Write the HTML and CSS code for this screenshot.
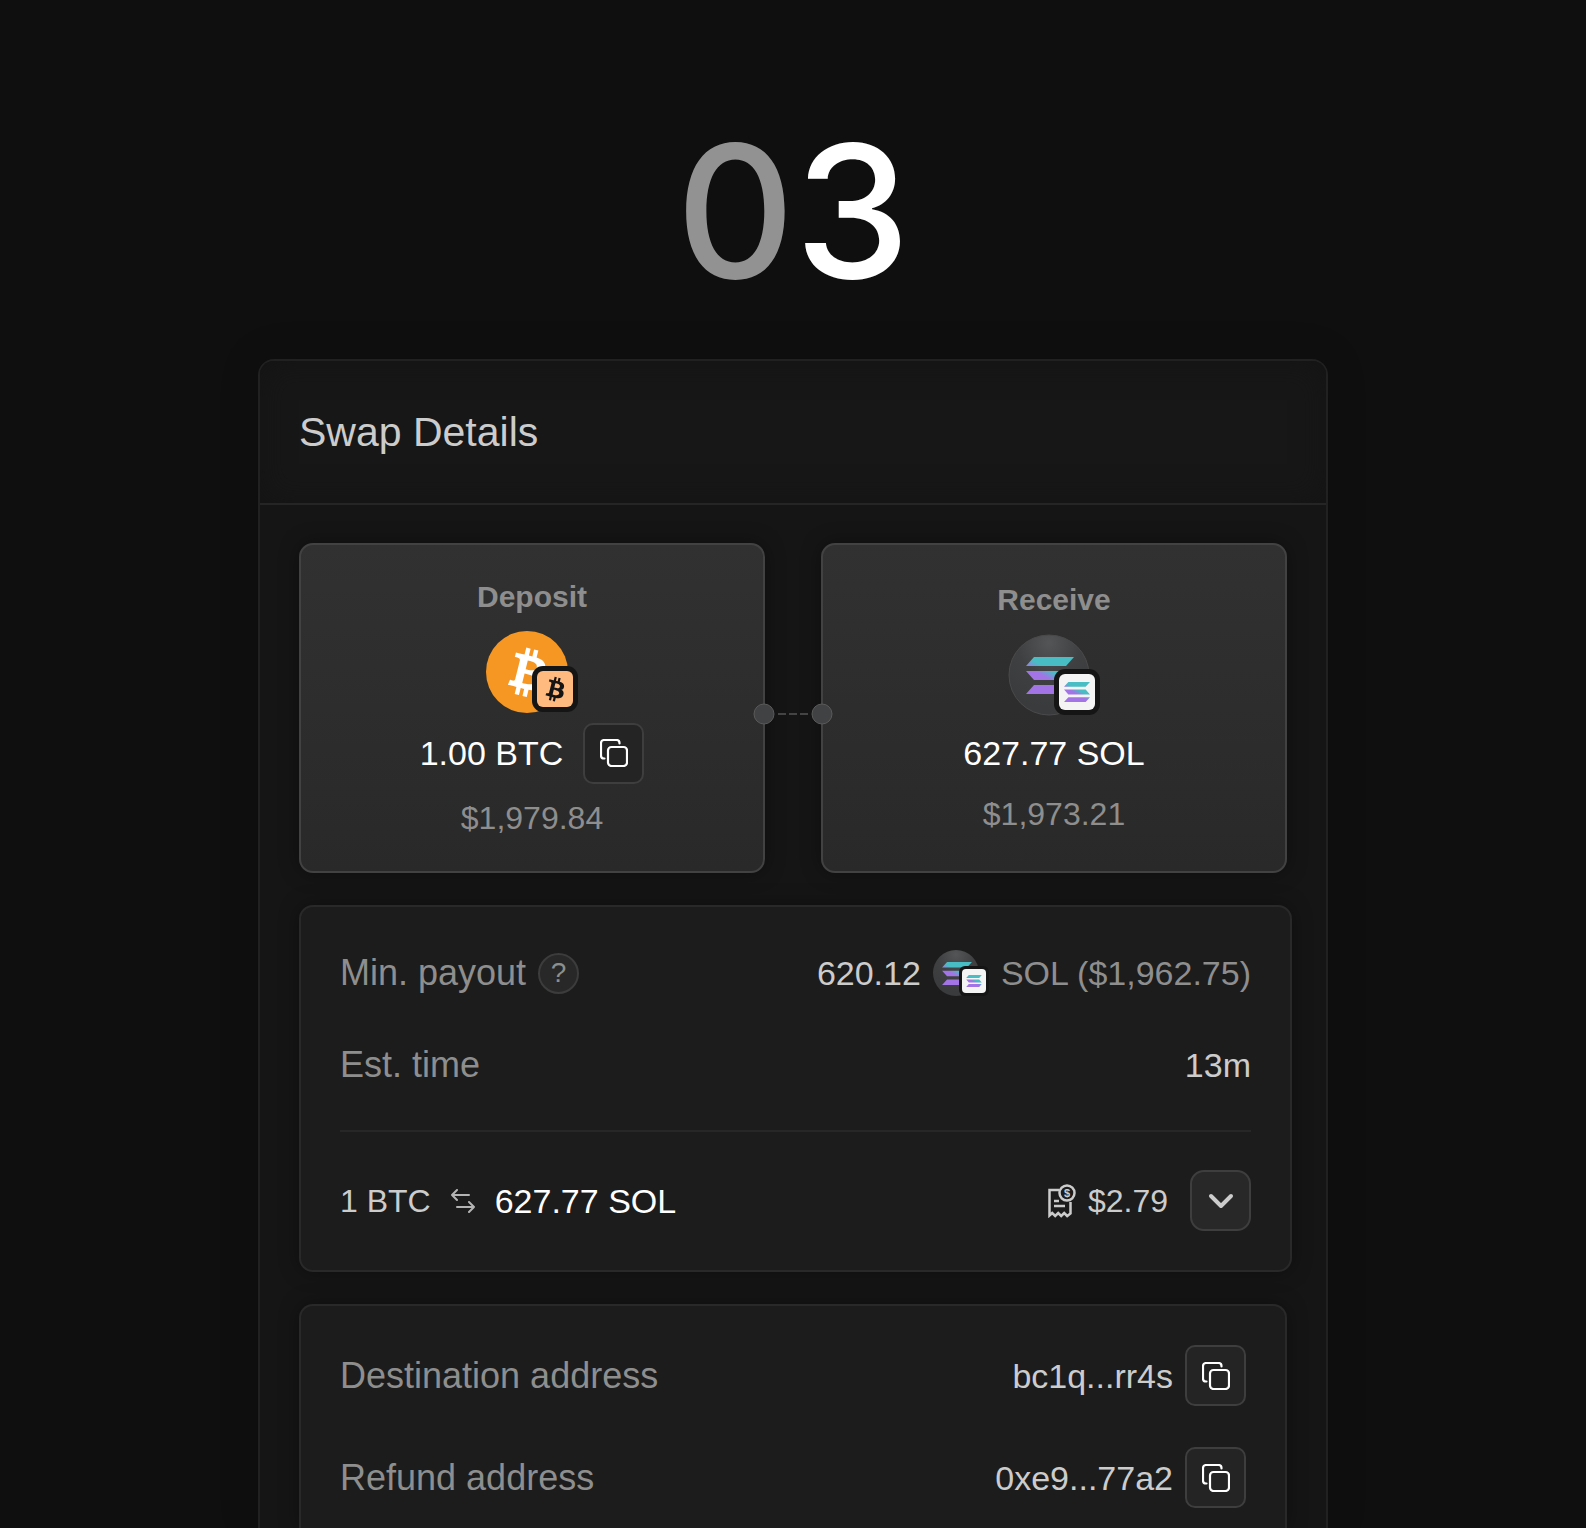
FILE: index.html
```html
<!doctype html>
<html lang="en">
<head>
  <meta charset="UTF-8">
  <meta name="viewport" content="width=device-width, initial-scale=1.0">
  <title>Swap Details</title>
  <link rel="stylesheet" href="styles.css">
</head>
<body>
  <!-- shared icon shapes -->
  <svg class="sprite" width="0" height="0" aria-hidden="true">
    <defs>
      <linearGradient id="sol-fill" gradientUnits="userSpaceOnUse" x1="21" y1="28" x2="31" y2="10">
        <stop offset="0.3" stop-color="#a374e6"/>
        <stop offset="0.7" stop-color="#48bdc3"/>
      </linearGradient>
      <radialGradient id="coin-fill" cx="0.5" cy="0.1" r="0.8">
        <stop offset="0" stop-color="#545557"/>
        <stop offset="0.5" stop-color="#3f4042"/>
        <stop offset="1" stop-color="#3a3b3d"/>
      </radialGradient>
      <symbol id="sol" viewBox="0 0 48 37">
        <path fill="url(#sol-fill)" d="M8 0h40l-8 9H0zM0 14h40l8 9H8zM8 28h40l-8 9H0z"/>
      </symbol>
      <symbol id="btc" viewBox="0 0 24 24">
        <path fill="currentColor" fill-rule="evenodd" d="M17.288 10.291c.24-1.59-.974-2.45-2.64-3.03l.54-2.153-1.315-.33-.525 2.107c-.345-.087-.705-.167-1.064-.25l.526-2.127-1.32-.33-.54 2.165c-.285-.067-.565-.132-.84-.2l-1.815-.45-.35 1.407s.975.225.955.236c.535.136.63.486.615.766l-1.477 5.92c-.075.166-.24.406-.614.314.015.02-.96-.24-.96-.24l-.66 1.51 1.71.426.93.242-.54 2.19 1.32.327.54-2.17c.36.1.705.19 1.05.273l-.51 2.154 1.32.33.545-2.19c2.24.427 3.93.257 4.64-1.774.57-1.637-.03-2.58-1.217-3.196.854-.193 1.5-.76 1.68-1.93zm-3.01 4.22c-.404 1.64-3.157.75-4.05.53l.72-2.9c.896.23 3.757.67 3.33 2.37zm.41-4.24c-.37 1.49-2.662.735-3.405.55l.654-2.64c.744.18 3.137.524 2.75 2.084z"/>
      </symbol>
      <symbol id="copy" viewBox="0 0 28 28">
        <path fill="none" stroke="currentColor" stroke-width="2.2" stroke-linecap="round" d="M19.500 4.500V4a3 3 0 0 0-3-3H4a3 3 0 0 0-3 3v12.500a3 3 0 0 0 3 3h.5"/>
        <rect x="8" y="8" width="19" height="19" rx="3.500" fill="none" stroke="currentColor" stroke-width="2.2"/>
      </symbol>
    </defs>
  </svg>

  <main class="page">
    <h1 class="step"><span class="step-zero">0</span>3</h1>

    <section class="panel">
      <header class="panel-header">
        <h2>Swap Details</h2>
      </header>

      <div class="panel-body">
        <div class="tokens">
          <article class="token-card">
            <h3>Deposit</h3>
            <svg class="token-icon" viewBox="0 0 92 82" role="img" aria-label="Bitcoin">
              <circle cx="41" cy="41" r="41" fill="#f79723"/>
              <use class="glyph-white" href="#btc" x="3" y="3" width="78" height="78"/>
              <rect x="46" y="35" width="46" height="46" rx="11" fill="#151515"/>
              <rect x="51" y="40" width="36" height="36" rx="6" fill="#ffba80"/>
              <use class="glyph-dark" href="#btc" x="50" y="39" width="39" height="39"/>
            </svg>
            <div class="token-amount">
              <span>1.00 BTC</span>
              <button class="icon-button" type="button" aria-label="Copy deposit amount">
                <svg class="copy-icon" aria-hidden="true"><use href="#copy"/></svg>
              </button>
            </div>
            <p class="token-value">$1,979.84</p>
          </article>

          <article class="token-card">
            <h3>Receive</h3>
            <svg class="token-icon" viewBox="0 0 92 82" role="img" aria-label="Solana">
              <circle cx="41" cy="41" r="40" fill="url(#coin-fill)" stroke="#4a4a4c"/>
              <use href="#sol" x="18" y="23" width="48" height="37"/>
              <rect x="46" y="35" width="46" height="46" rx="11" fill="#151515"/>
              <rect x="51" y="40" width="36" height="36" rx="6" fill="#f4f4f5"/>
              <use href="#sol" x="56" y="48" width="26" height="20"/>
            </svg>
            <div class="token-amount">627.77 SOL</div>
            <p class="token-value">$1,973.21</p>
          </article>

          <svg class="connector" viewBox="0 0 80 22" aria-hidden="true">
            <path d="M25 11h31" stroke="#444444" stroke-width="2" stroke-dasharray="8 3"/>
            <circle cx="11" cy="11" r="10"/>
            <circle cx="69" cy="11" r="10"/>
          </svg>
        </div>

        <div class="card card-wide">
          <div class="row">
            <span class="label">Min. payout
              <button class="help" type="button" aria-label="About minimum payout">?</button>
            </span>
            <span class="value">620.12
              <svg class="token-icon-small" viewBox="0 0 56 48" role="img" aria-label="Solana">
                <circle cx="23" cy="24" r="23" fill="url(#coin-fill)"/>
                <use href="#sol" x="9" y="13" width="30" height="23"/>
                <rect x="26" y="17" width="30" height="30" rx="6" fill="#151515"/>
                <rect x="29" y="20" width="24" height="24" rx="4" fill="#f4f4f5"/>
                <use href="#sol" x="33" y="26" width="16" height="12"/>
              </svg>
              <span class="muted">SOL ($1,962.75)</span>
            </span>
          </div>
          <div class="row">
            <span class="label">Est. time</span>
            <span class="value">13m</span>
          </div>
          <hr>
          <div class="row">
            <div class="rate">
              <span>1 BTC</span>
              <svg class="swap-icon" viewBox="0 0 24 24" aria-hidden="true">
                <path d="M18 6H1M6 1L1 6l5 5M6 18h17M18 13l5 5-5 5"/>
              </svg>
              <span class="rate-result">627.77 SOL</span>
            </div>
            <div class="fee">
              <svg class="receipt-icon" viewBox="0 0 28 34" aria-hidden="true">
                <path d="M11 6H1.500V31.500l2.700-2.500 3 3 3-3 3 3 3-3 3 3 3.300-2.500V18M6 17h5M6 22h11"/>
                <circle cx="19" cy="9" r="7.500"/>
                <text x="19" y="13" text-anchor="middle">$</text>
              </svg>
              <span>$2.79</span>
              <button class="icon-button expand" type="button" aria-label="Show fees">
                <svg class="chevron" viewBox="0 0 26 18" aria-hidden="true"><path d="M3 4l10 10 10-10"/></svg>
              </button>
            </div>
          </div>
        </div>

        <div class="card card-last">
          <div class="row">
            <span class="label">Destination address</span>
            <span class="value">bc1q...rr4s
              <button class="icon-button" type="button" aria-label="Copy destination address">
                <svg class="copy-icon" aria-hidden="true"><use href="#copy"/></svg>
              </button>
            </span>
          </div>
          <div class="row">
            <span class="label">Refund address</span>
            <span class="value">0xe9...77a2
              <button class="icon-button" type="button" aria-label="Copy refund address">
                <svg class="copy-icon" aria-hidden="true"><use href="#copy"/></svg>
              </button>
            </span>
          </div>
        </div>
      </div>
    </section>
  </main>
</body>
</html>
```

FILE: styles.css
```css
* {
    box-sizing: border-box;
}
body {
    margin: 0;
    background-color: #0f0f0f;
    color: #cccccc;
    font-family: "Liberation Sans", Arial, sans-serif;
    font-size: 34px;
}
h1, h2, h3, p {
    margin: 0;
}
svg {
    display: block;
    flex: none;
}
.sprite {
    position: absolute;
}
.page {
    display: flex;
    flex-direction: column;
    align-items: center;
    min-height: 100vh;
    padding-top: 119px;
}
.step {
    margin-bottom: 56px;
    font-family: Inter, sans-serif;
    font-size: 184px;
    font-weight: 500;
    line-height: 184px;
    color: #ffffff;
}
.step-zero {
    color: #929292;
}

/* panel */
.panel {
    display: flex;
    flex-direction: column;
    flex: 1;
    width: 100%;
    max-width: 1070px;
    border: 2px solid #212121;
    border-bottom: none;
    border-radius: 16px 16px 0 0;
    background-color: #151515;
    box-shadow: 0 0 40px rgba(0, 0, 0, 0.15);
}
.panel-header {
    padding: 47px 39px;
    border-bottom: 2px solid #252525;
    border-radius: 14px 14px 0 0;
    background-color: #171717;
    box-shadow: inset 0 0 32px #141414;
}
.panel-header h2 {
    font-size: 41px;
    font-weight: 400;
    line-height: 48px;
}
.panel-body {
    display: flex;
    flex-direction: column;
    flex: 1;
    gap: 32px;
    padding: 38px 39px 0;
}

/* deposit and receive */
.tokens {
    position: relative;
    display: grid;
    grid-template-columns: 1fr 1fr;
    gap: 56px;
}
.token-card {
    display: flex;
    flex-direction: column;
    align-items: center;
    justify-content: center;
    min-height: 330px;
    padding: 32px 0;
    border: 2px solid #424242;
    border-radius: 14px;
    background: linear-gradient(#313131, #292929);
    box-shadow: 0 0 20px rgba(0, 0, 0, 0.35);
}
.token-card h3 {
    margin-bottom: 16px;
    font-size: 30px;
    line-height: 36px;
    color: #8e8e8e;
}
.token-icon {
    width: 92px;
    height: 82px;
    margin-bottom: 10px;
}
.glyph-white {
    color: #ffffff;
}
.glyph-dark {
    color: #151515;
}
.token-amount {
    display: flex;
    align-items: center;
    gap: 20px;
    min-height: 54px;
    color: #ffffff;
}
.token-value {
    margin-top: 14px;
    font-size: 32px;
    line-height: 40px;
    color: #8e8e8e;
}
.connector {
    position: absolute;
    top: 160px;
    left: 50%;
    width: 80px;
    height: 22px;
    transform: translateX(-50%);
}
.connector circle {
    fill: #414244;
    stroke: #5a5a5a;
}

/* buttons */
.icon-button {
    display: flex;
    align-items: center;
    justify-content: center;
    width: 61px;
    height: 61px;
    padding: 0;
    border: 2px solid #3e3e3e;
    border-radius: 10px;
    background-color: #242424;
    color: #ffffff;
    cursor: pointer;
}
.icon-button:hover {
    background-color: #2c2c2c;
}
.copy-icon {
    width: 28px;
    height: 28px;
}
.expand {
    margin-left: 10px;
    border-radius: 14px;
    background-color: #282828;
}
.chevron {
    width: 26px;
    height: 18px;
    fill: none;
    stroke: #cccccc;
    stroke-width: 4;
    stroke-linecap: round;
    stroke-linejoin: round;
}
.help {
    width: 41px;
    height: 41px;
    padding: 0;
    border: 2px solid #3c3c3c;
    border-radius: 50%;
    background-color: #282828;
    font-family: inherit;
    font-size: 28px;
    line-height: 36px;
    color: #8e8e8e;
    cursor: pointer;
}

/* detail cards */
.card {
    display: flex;
    flex-direction: column;
    gap: 38px;
    padding: 39px;
    border: 2px solid #292929;
    border-radius: 14px;
    background-color: #1c1c1c;
    box-shadow: 0 0 20px rgba(0, 0, 0, 0.35);
}
.card-wide {
    margin-right: -5px;
}
.card-last {
    flex: 1;
    gap: 41px;
    padding-bottom: 16px;
    border-bottom: none;
    border-radius: 14px 14px 0 0;
}
.card hr {
    width: 100%;
    height: 2px;
    margin: 0;
    border: none;
    background-color: #272727;
}
.row {
    display: flex;
    align-items: center;
    justify-content: space-between;
    line-height: 54px;
}
.label, .value {
    display: flex;
    align-items: center;
    gap: 12px;
}
.label {
    font-size: 36px;
    color: #8e8e8e;
}
.muted {
    color: #8e8e8e;
}
.token-icon-small {
    width: 56px;
    height: 48px;
}
.rate {
    display: flex;
    align-items: center;
    gap: 20px;
    font-size: 32px;
}
.rate-result {
    font-size: 34px;
    color: #ffffff;
}
.swap-icon {
    width: 24px;
    height: 24px;
    fill: none;
    stroke: #b4b4b4;
    stroke-width: 2;
    stroke-linecap: round;
    stroke-linejoin: round;
}
.fee {
    display: flex;
    align-items: center;
    gap: 12px;
    font-size: 32px;
}
.receipt-icon {
    width: 28px;
    height: 34px;
    fill: none;
    stroke: #cccccc;
    stroke-width: 2.5;
}
.receipt-icon text {
    fill: #cccccc;
    stroke: none;
    font-size: 11px;
    font-weight: 700;
}
```
